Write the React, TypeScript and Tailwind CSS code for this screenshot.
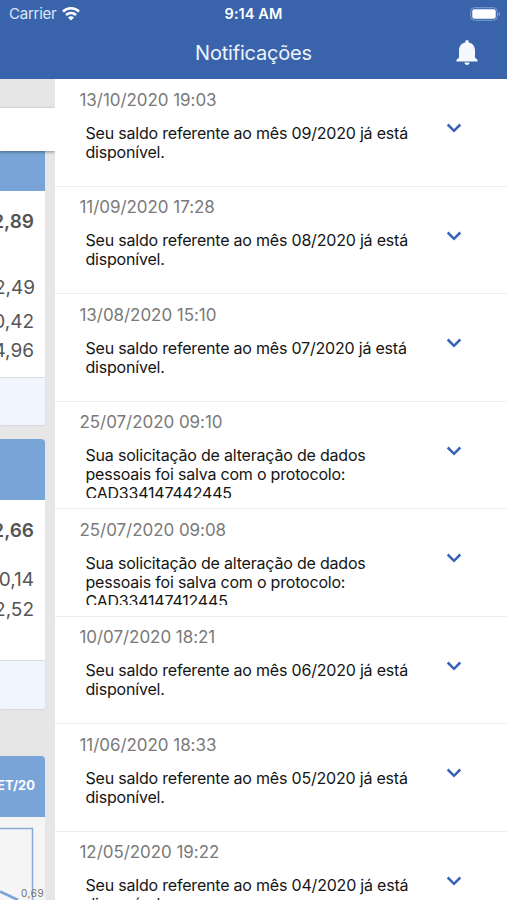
import React from 'react';

type Notice = { date: string; lines: string[] };

const balance = (month: string): string[] => [
  `Seu saldo referente ao mês ${month}/2020 já está`,
  'disponível.',
];

const protocol = (code: string): string[] => [
  'Sua solicitação de alteração de dados',
  'pessoais foi salva com o protocolo:',
  code,
];

const notices: Notice[] = [
  { date: '13/10/2020 19:03', lines: balance('09') },
  { date: '11/09/2020 17:28', lines: balance('08') },
  { date: '13/08/2020 15:10', lines: balance('07') },
  { date: '25/07/2020 09:10', lines: protocol('CAD334147442445') },
  { date: '25/07/2020 09:08', lines: protocol('CAD334147412445') },
  { date: '10/07/2020 18:21', lines: balance('06') },
  { date: '11/06/2020 18:33', lines: balance('05') },
  { date: '12/05/2020 19:22', lines: balance('04') },
];

function Wifi() {
  return (
    <svg className="ml-[6px] h-[14px] w-[18px]" viewBox="0 0 18 14" fill="none" stroke="#fff" strokeWidth="2.5">
      <path d="M1 4.600a11.400 11.400 0 0 1 16 0" />
      <path d="M4 8a7.100 7.100 0 0 1 10 0" />
      <path d="M9 13.400 6 10.400a4.200 4.200 0 0 1 6 0z" fill="#fff" stroke="none" />
    </svg>
  );
}

function Battery() {
  return (
    <svg className="h-[14px] w-[31px]" viewBox="0 0 31 14">
      <rect x="0.7" y="0.7" width="26.6" height="12.6" rx="3.8" fill="none" stroke="#7f9dcd" strokeWidth="1" />
      <rect x="2.300" y="2.300" width="23.400" height="9.400" rx="2" fill="#fff" />
      <path d="M28.7 4.8c1.8.8 1.8 3.6 0 4.4z" fill="#8ba6d3" />
    </svg>
  );
}

function Bell() {
  return (
    <svg className="h-[25px] w-[22px]" viewBox="0 0 22 25" fill="#f4f7fc">
      <path d="M11 0c1.1 0 1.8.8 1.8 1.9v.6c4 .9 6.2 4 6.2 8v7l2.6 2.6v1.4H.4v-1.4L3 17.500v-7c0-4 2.200-7.100 6.200-8v-.6C9.200.8 9.900 0 11 0z" />
      <path d="M8.500 22.500h5c0 1.400-1.100 2.500-2.500 2.500s-2.500-1.100-2.500-2.500z" />
    </svg>
  );
}

function Chevron() {
  return (
    <svg className="mt-[44.400px] h-[10px] w-[16px]" viewBox="0 0 16 10" fill="none" stroke="#3863b5" strokeWidth="2.500">
      <path d="M1.700 1.500 8 7.800l6.300-6.300" />
    </svg>
  );
}

function Amount({ className, children }: { className: string; children: React.ReactNode }) {
  return (
    <div className={`flex h-6 shrink-0 items-center justify-end whitespace-nowrap text-[19px] text-[#555] ${className}`}>
      {children}
    </div>
  );
}

function Summary() {
  return (
    <div className="flex w-[54.500px] shrink-0 flex-col overflow-hidden bg-[#e6e6e6]">
      <div className="z-10 mt-[29px] h-[42.500px] shrink-0 bg-white shadow-[0_1px_3px_rgba(0,0,0,0.4)]" />
      <div className="flex w-[45px] shrink-0 flex-col">
        <div className="h-[40px] bg-[#78a4d8]" />
        <div className="flex h-[186px] flex-col bg-white pr-[11px]">
          <Amount className="mt-[20px] font-semibold">2,89</Amount>
          <Amount className="mt-[41.500px] -mr-px">2,49</Amount>
          <Amount className="mt-[10px]">0,42</Amount>
          <Amount className="mt-[5.500px]">4,96</Amount>
        </div>
        <div className="h-[48px] rounded-b-[2px] border-t border-[#d9dde3] bg-[#f0f5fe] shadow-[0_1px_1px_#d4d7dc]" />
        <div className="mt-[14px] h-[61px] rounded-tr-[4px] bg-[#78a4d8]" />
        <div className="flex h-[160px] flex-col bg-white pr-[11px]">
          <Amount className="mt-[20px] font-semibold">2,66</Amount>
          <Amount className="mt-[25px]">0,14</Amount>
          <Amount className="mt-[5.500px]">2,52</Amount>
        </div>
        <div className="h-[49px] rounded-b-[2px] border-t border-[#d9dde3] bg-[#f0f5fe] shadow-[0_1px_1px_#d4d7dc]" />
        <div className="mt-[47px] flex h-[61px] items-center justify-end rounded-tr-[4px] bg-[#78a4d8] pr-[10px] pb-px text-[13px] font-bold text-white">
          <span>SET/20</span>
        </div>
        <div className="h-[85px] bg-[#f5f5f5]">
          <svg className="block h-[85px] w-[45px]" viewBox="0 0 45 85">
            <path d="M0 11.500H32.500V85" fill="none" stroke="#8cabd9" strokeWidth="1.500" />
            <path d="M0 74.500 18 83" fill="none" stroke="#78a4d8" strokeWidth="2.500" />
            <text x="21" y="80" fontSize="10" letterSpacing="0.500" fill="#707070">0,69</text>
          </svg>
        </div>
      </div>
    </div>
  );
}

function NoticeRow({ notice }: { notice: Notice }) {
  return (
    <li className="flex h-[107.500px] shrink-0 border-b border-[#ececec] bg-white">
      <div className="w-[391px] pl-[25px]">
        <div className="mt-[10.500px] h-[21px] whitespace-nowrap text-[17px] leading-[21px] tracking-[-0.05px] text-[#7a7a7a]">
          {notice.date}
        </div>
        <div className="mt-[13px] h-[51.500px] overflow-hidden whitespace-nowrap pl-[6px] text-[16px] leading-[19px] tracking-[-0.2px] text-[#151515]">
          {notice.lines.map((line) => (
            <div key={line}>{line}</div>
          ))}
        </div>
      </div>
      <Chevron />
    </li>
  );
}

export default function App() {
  return (
    <div className="flex h-[900px] w-[507px] flex-col overflow-hidden bg-white font-['Inter','Liberation_Sans',sans-serif]">
      <header className="h-[79px] shrink-0 bg-[#3964ac] text-white">
        <div className="grid h-[27px] grid-cols-3 items-center">
          <div className="flex items-center pl-[9px] text-[15px] text-[#dce6f6]">
            <span className="relative top-px tracking-[-0.25px]">Carrier</span>
            <Wifi />
          </div>
          <div className="text-center text-[14.500px] font-semibold tracking-[0.1px]">9:14 AM</div>
          <div className="flex justify-end pr-[6px]"><Battery /></div>
        </div>
        <div className="grid h-[51px] grid-cols-3 items-center">
          <span />
          <h1 className="text-center text-[20px] tracking-[-0.2px] text-[#edf3fc]">Notificações</h1>
          <div className="flex justify-end pr-[29px] pb-px"><Bell /></div>
        </div>
      </header>
      <main className="flex min-h-0 flex-1">
        <Summary />
        <ul className="flex min-w-0 flex-1 flex-col overflow-hidden">
          {notices.map((notice) => (
            <NoticeRow key={notice.date} notice={notice} />
          ))}
        </ul>
      </main>
    </div>
  );
}
